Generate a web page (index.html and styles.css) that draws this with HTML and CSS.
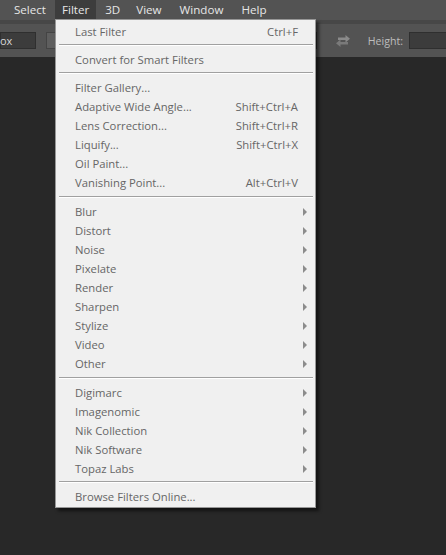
FILE: index.html
```html
<!DOCTYPE html>
<html lang="en">
<head>
    <meta charset="UTF-8">
    <title>Filter menu</title>
    <link rel="stylesheet" href="styles.css">
</head>
<body>
    <div class="menubar">
        <span class="menubar-item">Select</span>
        <span class="menubar-item active">Filter</span>
        <span class="menubar-item">3D</span>
        <span class="menubar-item">View</span>
        <span class="menubar-item wide">Window</span>
        <span class="menubar-item wide">Help</span>

        <!-- Filter dropdown -->
        <div class="dropdown">
            <div class="row"><span>Last Filter</span><span class="key">Ctrl+F</span></div>
            <div class="sep"></div>
            <div class="row"><span>Convert for Smart Filters</span></div>
            <div class="sep"></div>
            <div class="row"><span>Filter Gallery...</span></div>
            <div class="row"><span>Adaptive Wide Angle...</span><span class="key">Shift+Ctrl+A</span></div>
            <div class="row"><span>Lens Correction...</span><span class="key">Shift+Ctrl+R</span></div>
            <div class="row"><span>Liquify...</span><span class="key">Shift+Ctrl+X</span></div>
            <div class="row"><span>Oil Paint...</span></div>
            <div class="row"><span>Vanishing Point...</span><span class="key">Alt+Ctrl+V</span></div>
            <div class="sep tall"></div>
            <div class="row sub"><span>Blur</span></div>
            <div class="row sub"><span>Distort</span></div>
            <div class="row sub"><span>Noise</span></div>
            <div class="row sub"><span>Pixelate</span></div>
            <div class="row sub"><span>Render</span></div>
            <div class="row sub"><span>Sharpen</span></div>
            <div class="row sub"><span>Stylize</span></div>
            <div class="row sub"><span>Video</span></div>
            <div class="row sub"><span>Other</span></div>
            <div class="sep tall"></div>
            <div class="row sub"><span>Digimarc</span></div>
            <div class="row sub"><span>Imagenomic</span></div>
            <div class="row sub"><span>Nik Collection</span></div>
            <div class="row sub"><span>Nik Software</span></div>
            <div class="row sub"><span>Topaz Labs</span></div>
            <div class="sep"></div>
            <div class="row"><span>Browse Filters Online...</span></div>
        </div>
    </div>

    <div class="options">
        <div class="field left">ox</div>
        <div class="field small"></div>
        <div class="spacer"></div>
        <div class="field mid"></div>
        <svg class="swap" width="16" height="14" viewBox="0 0 16 14">
            <path d="M3 3.5h7.5V1L15 4.75 10.5 8.5V6H3z" fill="#8a8a8a"/>
            <path d="M13 8H5.5V5.5L1 9.25 5.5 13v-2.5H13z" fill="#7a7a7a"/>
        </svg>
        <span class="label">Height:</span>
        <div class="field right"></div>
    </div>

    <div class="canvas"></div>
</body>
</html>
```

FILE: styles.css
```css
body {
    margin: 0;
    background: #282828;
    font-family: "Open Sans", "Noto Sans", sans-serif;
    width: 446px;
    height: 555px;
    overflow: hidden;
}

.menubar {
    position: relative;
    height: 20px;
    background: #535353;
    display: flex;
    padding-left: 6px;
    z-index: 2;
}

.menubar-item {
    color: #e6e6e6;
    font-size: 11.6px;
    line-height: 20px;
    padding: 0 8px;
}

.menubar-item.active {
    background: #3d3d3d;
    margin-left: 1px;
    padding: 0 7px;
    margin-right: 1px;
}

.menubar-item.wide {
    padding-left: 10px;
}

.options {
    height: 33px;
    background: #535353;
    border-top: 4px solid #474747;
    display: flex;
    align-items: center;
}

.field {
    height: 17px;
    background: #3c3c3c;
    border: 1px solid #2f2f2f;
    box-sizing: border-box;
    color: #d8d8d8;
    font-size: 11px;
    line-height: 15px;
}

.field.left {
    width: 36px;
    text-indent: -1px;
}

.field.small {
    width: 14px;
    margin-left: 10px;
    background: #5e5e5e;
    border-color: #444;
}

.spacer {
    flex: 1;
}

.field.mid {
    width: 23px;
}

.swap {
    margin: 0 17px 0 18px;
}

.label {
    color: #bdbdbd;
    font-size: 10.6px;
    margin-right: 6px;
}

.field.right {
    width: 37px;
    border-right: none;
}

.dropdown {
    position: absolute;
    left: 55px;
    top: 19px;
    width: 261px;
    padding: 2px 0 1px;
    box-sizing: border-box;
    background: #f0f0f0;
    border: 1px solid #979797;
    box-shadow: 3px 3px 3px rgba(0, 0, 0, 0.55);
}

.row {
    height: 19px;
    display: flex;
    justify-content: space-between;
    align-items: center;
    padding: 0 17px 0 19px;
    color: #666;
    font-size: 11.3px;
    position: relative;
}

.sub::after {
    content: "";
    position: absolute;
    right: 8px;
    top: 6px;
    border-left: 4px solid #8c8c8c;
    border-top: 4px solid transparent;
    border-bottom: 4px solid transparent;
}

.sep {
    height: 1px;
    margin: 3px 2px 4px 3px;
    background: #a0a0a0;
    border-bottom: 1px solid #fff;
}

.sep.tall {
    margin-top: 4px;
}
```
